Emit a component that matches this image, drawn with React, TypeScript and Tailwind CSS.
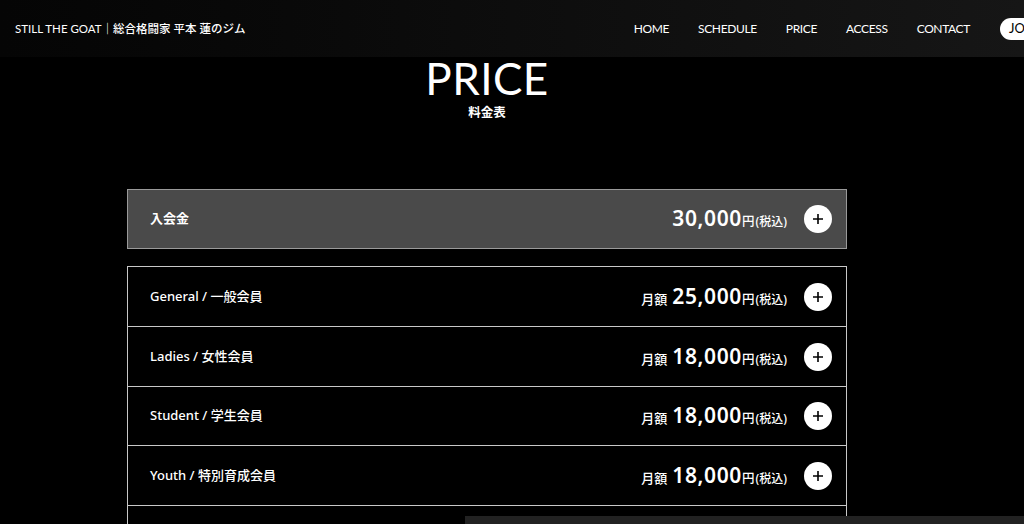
import React from 'react';

interface PlanRow {
  label: string;
  prefix?: string;
  price: string;
}

const plans: PlanRow[] = [
  { label: 'General / 一般会員', prefix: '月額', price: '25,000' },
  { label: 'Ladies / 女性会員', prefix: '月額', price: '18,000' },
  { label: 'Student / 学生会員', prefix: '月額', price: '18,000' },
  { label: 'Youth / 特別育成会員', prefix: '月額', price: '18,000' },
];

const navItems = ['HOME', 'SCHEDULE', 'PRICE', 'ACCESS', 'CONTACT'];

const PlusButton: React.FC = () => (
  <span className="flex h-[28px] w-[28px] shrink-0 items-center justify-center rounded-full bg-white">
    <svg width="12" height="12" viewBox="0 0 12 12" fill="none">
      <path d="M6 1v10M1 6h10" stroke="#000" strokeWidth="1.6" />
    </svg>
  </span>
);

const Price: React.FC<{ prefix?: string; price: string }> = ({ prefix, price }) => (
  <div className="flex items-baseline text-white">
    {prefix && <span className="mr-[5px] text-[13px] font-medium">{prefix}</span>}
    <span className="text-[21px] font-semibold tracking-[0.03em]">{price}</span>
    <span className="text-[12.5px] font-medium">円</span>
    <span className="ml-[1px] text-[12px] font-medium">(税込)</span>
  </div>
);

export default function App() {
  return (
    <div
      className="relative min-h-screen overflow-hidden bg-black text-white"
      style={{ fontFamily: '"Noto Sans", "Noto Sans CJK JP", sans-serif' }}
    >
      <header className="flex h-[57px] items-center justify-between bg-gradient-to-r from-[#050505] via-[#0d0d0d] to-[#161616] pl-[15px]">
        <div className="text-[11.5px] text-white">
          <span style={{ fontFamily: 'Lato, "Noto Sans CJK JP", sans-serif' }}>STILL THE GOAT</span>
          <span className="font-medium">｜総合格闘家 平本 蓮のジム</span>
        </div>
        <nav className="flex items-center" style={{ fontFamily: 'Lato, sans-serif' }}>
          <ul className="flex gap-[29px] text-[12px] tracking-[-0.03em]">
            {navItems.map((item) => (
              <li key={item}>{item}</li>
            ))}
          </ul>
          <span className="ml-[30px] flex h-[22px] w-[24px] items-center overflow-hidden whitespace-nowrap rounded-l-full bg-white pl-[9px] text-[13px] text-black">
            JO
          </span>
        </nav>
      </header>

      <div className="ml-[127px] w-[720px]">
        <section className="flex flex-col items-center">
          <h1
            className="text-[44px] leading-[42px] tracking-[0.01em]"
            style={{ fontFamily: 'Lato, sans-serif', fontWeight: 400 }}
          >
            PRICE
          </h1>
          <p className="mt-[5px] text-[12.5px] font-bold">料金表</p>
        </section>

        <div className="mt-[66px] flex h-[60px] items-center justify-between border border-[#9a9a9a] bg-[#4a4a4a] pl-[22px] pr-[14px]">
          <span className="text-[13px] font-bold">入会金</span>
          <div className="flex items-center gap-[17px]">
            <Price price="30,000" />
            <PlusButton />
          </div>
        </div>

        <div className="mt-[17px] border border-[#c8c8c8]">
          {plans.map((p, i) => (
            <div
              key={p.label}
              className={`flex h-[59.5px] items-center justify-between pl-[22px] pr-[14px] ${i > 0 ? 'border-t border-[#c8c8c8]' : ''}`}
            >
              <span className="text-[13px] font-medium">{p.label}</span>
              <div className="flex items-center gap-[17px]">
                <Price prefix={p.prefix} price={p.price} />
                <PlusButton />
              </div>
            </div>
          ))}
          <div className="h-[59.5px] border-t border-[#c8c8c8]" />
        </div>
      </div>

      <div className="fixed bottom-0 left-[465px] right-0 h-[8px] bg-[#222]" />
    </div>
  );
}
